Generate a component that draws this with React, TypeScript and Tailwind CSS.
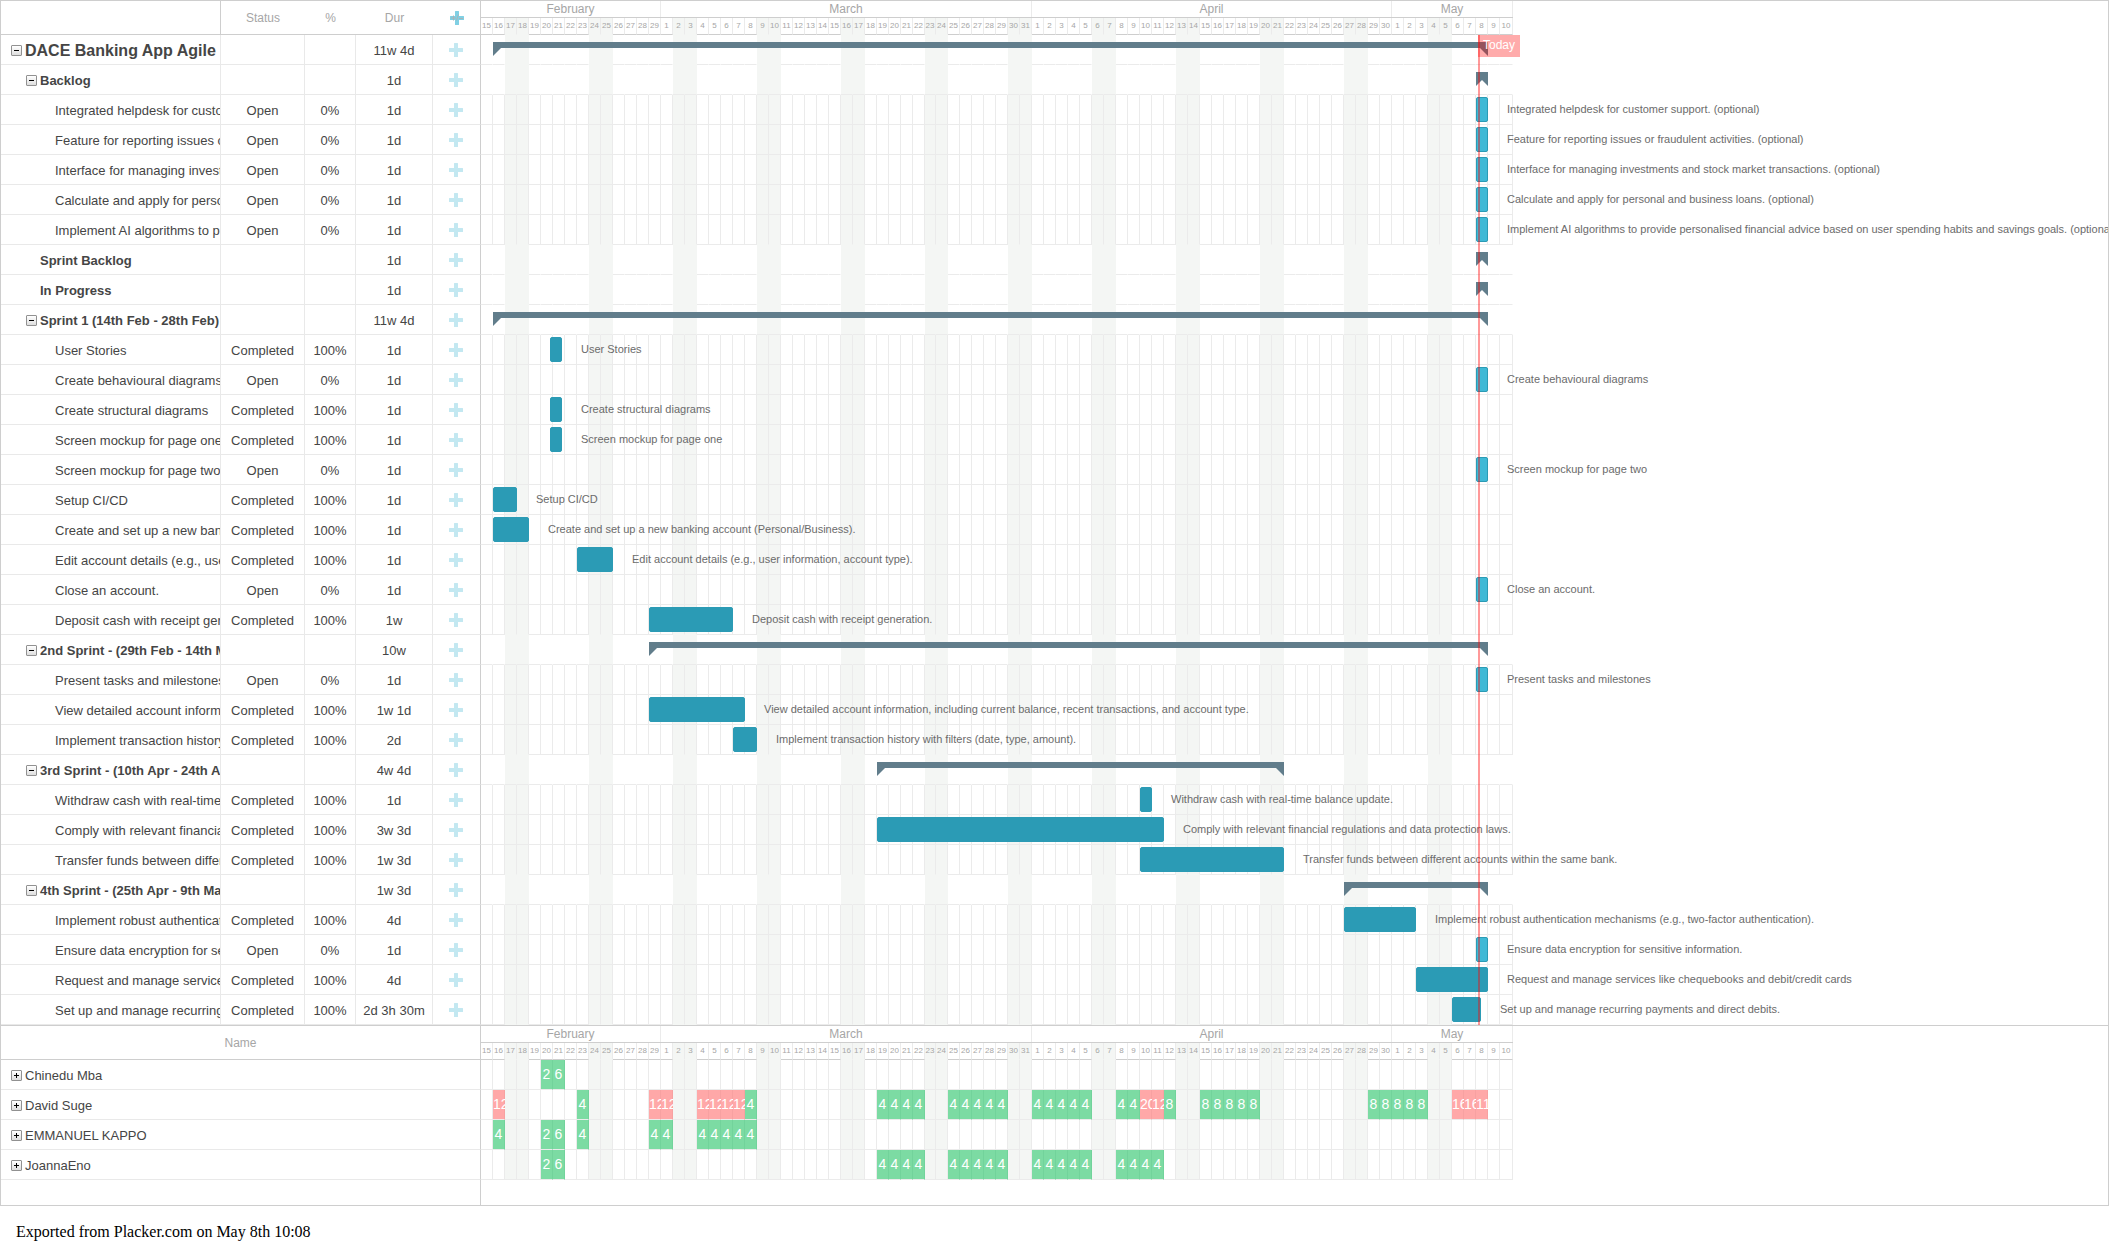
import React from "react";

type Row = {
  name: string;
  kind: "root" | "group" | "task";
  toggle?: boolean;
  status?: string;
  pct?: string;
  dur: string;
  from: number;
  to: number;
};

const open = (name: string): Row => ({ name, kind: "task", status: "Open", pct: "0%", dur: "1d", from: 995, to: 1007 });
const done = (name: string, dur: string, from: number, to: number): Row => ({
  name,
  kind: "task",
  status: "Completed",
  pct: "100%",
  dur,
  from,
  to,
});
const group = (name: string, dur: string, from: number, to: number, toggle = true): Row => ({
  name,
  kind: "group",
  toggle,
  dur,
  from,
  to,
});

const rows: Row[] = [
  { name: "DACE Banking App Agile", kind: "root", toggle: true, dur: "11w 4d", from: 12, to: 1007 },
  group("Backlog", "1d", 995, 1007),
  open("Integrated helpdesk for customer support. (optional)"),
  open("Feature for reporting issues or fraudulent activities. (optional)"),
  open("Interface for managing investments and stock market transactions. (optional)"),
  open("Calculate and apply for personal and business loans. (optional)"),
  open(
    "Implement AI algorithms to provide personalised financial advice based on user spending habits and savings goals. (optional)"
  ),
  group("Sprint Backlog", "1d", 995, 1007, false),
  group("In Progress", "1d", 995, 1007, false),
  group("Sprint 1 (14th Feb - 28th Feb)", "11w 4d", 12, 1007),
  done("User Stories", "1d", 69, 81),
  open("Create behavioural diagrams"),
  done("Create structural diagrams", "1d", 69, 81),
  done("Screen mockup for page one", "1d", 69, 81),
  open("Screen mockup for page two"),
  done("Setup CI/CD", "1d", 12, 36),
  done("Create and set up a new banking account (Personal/Business).", "1d", 12, 48),
  done("Edit account details (e.g., user information, account type).", "1d", 96, 132),
  open("Close an account."),
  done("Deposit cash with receipt generation.", "1w", 168, 252),
  group("2nd Sprint - (29th Feb - 14th Mar)", "10w", 168, 1007),
  open("Present tasks and milestones"),
  done(
    "View detailed account information, including current balance, recent transactions, and account type.",
    "1w 1d",
    168,
    264
  ),
  done("Implement transaction history with filters (date, type, amount).", "2d", 252, 276),
  group("3rd Sprint - (10th Apr - 24th Apr)", "4w 4d", 396, 803),
  done("Withdraw cash with real-time balance update.", "1d", 659, 671),
  done("Comply with relevant financial regulations and data protection laws.", "3w 3d", 396, 683),
  done("Transfer funds between different accounts within the same bank.", "1w 3d", 659, 803),
  group("4th Sprint - (25th Apr - 9th May)", "1w 3d", 863, 1007),
  done("Implement robust authentication mechanisms (e.g., two-factor authentication).", "4d", 863, 935),
  open("Ensure data encryption for sensitive information."),
  done("Request and manage services like chequebooks and debit/credit cards", "4d", 935, 1007),
  done("Set up and manage recurring payments and direct debits.", "2d 3h 30m", 971, 1000),
];

const months = [
  { name: "February", first: 15, last: 29, width: "w-[180px]" },
  { name: "March", first: 1, last: 31, width: "w-[371px]" },
  { name: "April", first: 1, last: 30, width: "w-[360px]" },
  { name: "May", first: 1, last: 10, width: "w-[121px]" },
];

const days = months
  .flatMap((m) => Array.from({ length: m.last - m.first + 1 }, (_, i) => m.first + i))
  .map((label, i) => ({
    label,
    weekend: i % 7 === 2 || i % 7 === 3,
    width: i === 37 ? "w-[11px]" : i === 85 ? "w-[13px]" : "w-[12px]",
  }));

type Load = Record<number, number>;
const load = (...spans: [number, number, number][]): Load => {
  const out: Load = {};
  spans.forEach(([a, b, v]) => {
    for (let d = a; d <= b; d++) out[d] = v;
  });
  return out;
};

const people: { name: string; load: Load }[] = [
  { name: "Chinedu Mba", load: load([5, 5, 2], [6, 6, 6]) },
  {
    name: "David Suge",
    load: load(
      [1, 1, 12],
      [8, 8, 4],
      [14, 15, 12],
      [18, 21, 12],
      [22, 22, 4],
      [33, 36, 4],
      [39, 43, 4],
      [46, 50, 4],
      [53, 54, 4],
      [55, 55, 20],
      [56, 56, 12],
      [57, 57, 8],
      [60, 64, 8],
      [74, 78, 8],
      [81, 82, 16],
      [83, 83, 11]
    ),
  },
  { name: "EMMANUEL KAPPO", load: load([1, 1, 4], [5, 5, 2], [6, 6, 6], [8, 8, 4], [14, 15, 4], [18, 22, 4]) },
  { name: "JoannaEno", load: load([5, 5, 2], [6, 6, 6], [33, 36, 4], [39, 43, 4], [46, 50, 4], [53, 56, 4]) },
];

function Toggle({ expanded, label }: { expanded: boolean; label: string }) {
  return (
    <button
      type="button"
      aria-label={`${expanded ? "Collapse" : "Expand"} ${label}`}
      aria-expanded={expanded}
      className="flex size-[11px] shrink-0 items-center justify-center rounded-[1px] border border-[#919191] bg-linear-to-b from-white to-[#dedede]"
    >
      <svg viewBox="0 0 5 5" className="size-[5px]" shapeRendering="crispEdges" aria-hidden="true">
        <path d={expanded ? "M0 2h5v1H0z" : "M0 2h5v1H0zM2 0h1v5H2z"} fill="#000" />
      </svg>
    </button>
  );
}

function AddButton({ header = false, label }: { header?: boolean; label: string }) {
  return (
    <button type="button" aria-label={label} className="mx-auto block size-[14px]">
      <svg viewBox="0 0 14 14" className="size-[14px]" aria-hidden="true">
        <path
          d="M5.5 0h3a.5.5 0 0 1 .5.5V5h4.5a.5.5 0 0 1 .5.5v3a.5.5 0 0 1-.5.5H9v4.5a.5.5 0 0 1-.5.5h-3a.5.5 0 0 1-.5-.5V9H.5a.5.5 0 0 1-.5-.5v-3A.5.5 0 0 1 .5 5H5V.5a.5.5 0 0 1 .5-.5z"
          fill={header ? "#80d0e4" : "#c3e8f1"}
        />
        {header && <path d="M1 7h5M3.5 4.5v5M6.5 9.5l2-6M9 7.5h4" stroke="#a9b4b8" strokeWidth="1" fill="none" />}
      </svg>
    </button>
  );
}

function Scale() {
  return (
    <div className="w-fit text-[#a6a6a6]">
      <div className="flex h-[17px] border-b border-[#cecece] text-xs leading-4">
        {months.map((m) => (
          <div key={m.name} className={`${m.width} border-r border-[#ebebeb] text-center`}>
            {m.name}
          </div>
        ))}
      </div>
      <div className="flex h-[17px] text-[8px] leading-4">
        {days.map((d, i) => (
          <div
            key={i}
            className={`${d.width} border-r border-b border-r-[#ebebeb] text-center ${
              d.weekend ? "border-b-[#f4f6f4] bg-[#f4f6f4]" : "border-b-[#cecece]"
            }`}
          >
            {d.label}
          </div>
        ))}
      </div>
    </div>
  );
}

function SummaryBar({ from, to }: { from: number; to: number }) {
  return (
    <div className="absolute top-[7px] h-[6px] bg-[#617d8b]" style={{ left: from, width: to - from }}>
      <svg viewBox="0 0 8 8" className="absolute top-[6px] left-0 size-2" aria-hidden="true">
        <path d="M0 0h8L0 8z" fill="#617d8b" />
      </svg>
      <svg viewBox="0 0 8 8" className="absolute top-[6px] right-0 size-2" aria-hidden="true">
        <path d="M8 0H0l8 8z" fill="#617d8b" />
      </svg>
    </div>
  );
}

function GanttCells({ row, nextIsTask }: { row: Row; nextIsTask: boolean }) {
  const task = row.kind === "task";
  return (
    <div className="relative flex h-[30px]">
      {days.map((d, i) => (
        <div
          key={i}
          className={`${d.width} shrink-0 border-r border-b ${d.weekend ? "bg-[#f4f6f4]" : ""} ${
            task ? "border-r-[#ebebeb]" : d.weekend ? "border-r-[#f4f6f4]" : "border-r-transparent"
          } ${d.weekend && !nextIsTask ? "border-b-[#f4f6f4]" : "border-b-[#ebebeb]"}`}
        />
      ))}
      {task ? (
        <>
          <div
            className={`absolute top-[2px] h-[25px] rounded-[2px] border border-[#2b9bb5] ${
              row.status === "Open" ? "bg-[#3fb9d6]" : "bg-[#2b9bb5]"
            }`}
            style={{ left: row.from, width: row.to - row.from }}
          />
          <span
            className="absolute top-0 text-[11px] leading-[29px] whitespace-nowrap text-[#6b6b6b]"
            style={{ left: row.to + 19 }}
          >
            {row.name}
          </span>
        </>
      ) : (
        <SummaryBar from={row.from} to={row.to} />
      )}
    </div>
  );
}

function TaskRow({ row, nextIsTask }: { row: Row; nextIsTask: boolean }) {
  const indent = row.kind === "root" ? "pl-[10px]" : row.kind === "task" ? "pl-[54px]" : row.toggle ? "pl-[25px]" : "pl-[39px]";
  const weight = row.kind === "root" ? "text-base font-bold" : row.kind === "group" ? "font-bold" : "font-normal";
  const cell = "h-[30px] border-r border-b border-[#e9e9e9] p-0 pt-[2px] text-center leading-[26px]";
  return (
    <tr>
      <th scope="row" className="h-[30px] border-r border-b border-[#e9e9e9] p-0 pt-[2px] text-left">
        <div className={`flex h-[27px] items-center gap-[3px] overflow-hidden leading-[26px] whitespace-nowrap ${indent} ${weight}`}>
          {row.toggle && <Toggle expanded label={row.name} />}
          <span>{row.name}</span>
        </div>
      </th>
      <td className={cell}>{row.status}</td>
      <td className={cell}>{row.pct}</td>
      <td className={cell}>{row.dur}</td>
      <td className="h-[30px] border-r border-b border-r-[#cecece] border-b-[#e9e9e9] p-0 pr-[2px]">
        <AddButton label={`Add below ${row.name}`} />
      </td>
      <td className="p-0 align-top">
        <GanttCells row={row} nextIsTask={nextIsTask} />
      </td>
    </tr>
  );
}

function Tasks() {
  const head = "h-[34px] border-b border-[#cecece] p-0 text-center text-xs font-normal text-[#a6a6a6]";
  return (
    <section className="relative overflow-hidden">
      <table className="w-full table-fixed border-separate border-spacing-0">
        <colgroup>
          <col className="w-[220px]" />
          <col className="w-[84px]" />
          <col className="w-[51px]" />
          <col className="w-[77px]" />
          <col className="w-[48px]" />
          <col />
        </colgroup>
        <thead>
          <tr>
            <th className={`${head} border-r`} aria-label="Task" />
            <th className={head}>Status</th>
            <th className={head}>%</th>
            <th className={head}>Dur</th>
            <th className={`${head} border-r`}>
              <AddButton header label="Add or remove columns" />
            </th>
            <th className="p-0 align-top font-normal">
              <Scale />
            </th>
          </tr>
        </thead>
        <tbody>
          {rows.map((row, i) => (
            <TaskRow key={row.name} row={row} nextIsTask={rows[i + 1]?.kind === "task"} />
          ))}
        </tbody>
      </table>
      <div className="absolute top-[34px] bottom-0 left-[1477px] w-[2px] bg-[#ff0000]/40" />
      <div className="absolute top-[34px] left-[1477px] h-[22px] w-[42px] bg-[#ff0000]/33 pl-[5px] text-xs leading-[21px] text-white">
        Today
      </div>
    </section>
  );
}

function Resources() {
  return (
    <section className="overflow-hidden border-t border-[#cecece]">
      <table className="w-full table-fixed border-separate border-spacing-0">
        <colgroup>
          <col className="w-[480px]" />
          <col />
        </colgroup>
        <thead>
          <tr>
            <th className="h-[34px] border-r border-b border-[#cecece] p-0 text-xs font-normal text-[#a6a6a6]">Name</th>
            <th className="p-0 align-top font-normal">
              <Scale />
            </th>
          </tr>
        </thead>
        <tbody>
          {people.map((p) => (
            <tr key={p.name}>
              <th
                scope="row"
                className="h-[30px] border-r border-b border-r-[#cecece] border-b-[#e9e9e9] p-0 pt-[2px] text-left font-normal"
              >
                <div className="flex h-[27px] items-center gap-[3px] pl-[10px] leading-[26px]">
                  <Toggle expanded={false} label={p.name} />
                  <span>{p.name}</span>
                </div>
              </th>
              <td className="p-0 align-top">
                <div className="flex h-[30px] text-sm leading-[29px] text-white">
                  {days.map((d, i) => {
                    const hours = p.load[i];
                    const tone =
                      hours === undefined
                        ? d.weekend
                          ? "border-r-[#ebebeb] bg-[#f4f6f4]"
                          : "border-r-[#ebebeb]"
                        : hours > 8
                          ? "border-r-[#f7a1a1] bg-[#ffa8a8]"
                          : "border-r-[#72d39b] bg-[#7cdba3]";
                    return (
                      <div key={i} className={`${d.width} shrink-0 border-r border-b border-b-[#ebebeb] text-center ${tone}`}>
                        {hours}
                      </div>
                    );
                  })}
                </div>
              </td>
            </tr>
          ))}
          <tr>
            <td className="h-[25px] border-r border-[#cecece] p-0" />
            <td className="p-0" />
          </tr>
        </tbody>
      </table>
    </section>
  );
}

export default function App() {
  return (
    <main className="min-h-screen bg-white font-['Liberation_Sans',Arial,sans-serif] text-[13px] text-[#454545]">
      <div className="border border-[#cecece]">
        <Tasks />
        <Resources />
      </div>
      <p className="px-4 pt-4 font-['Liberation_Serif','Times_New_Roman',serif] text-base leading-5 text-black">
        Exported from Placker.com on May 8th 10:08
      </p>
    </main>
  );
}
